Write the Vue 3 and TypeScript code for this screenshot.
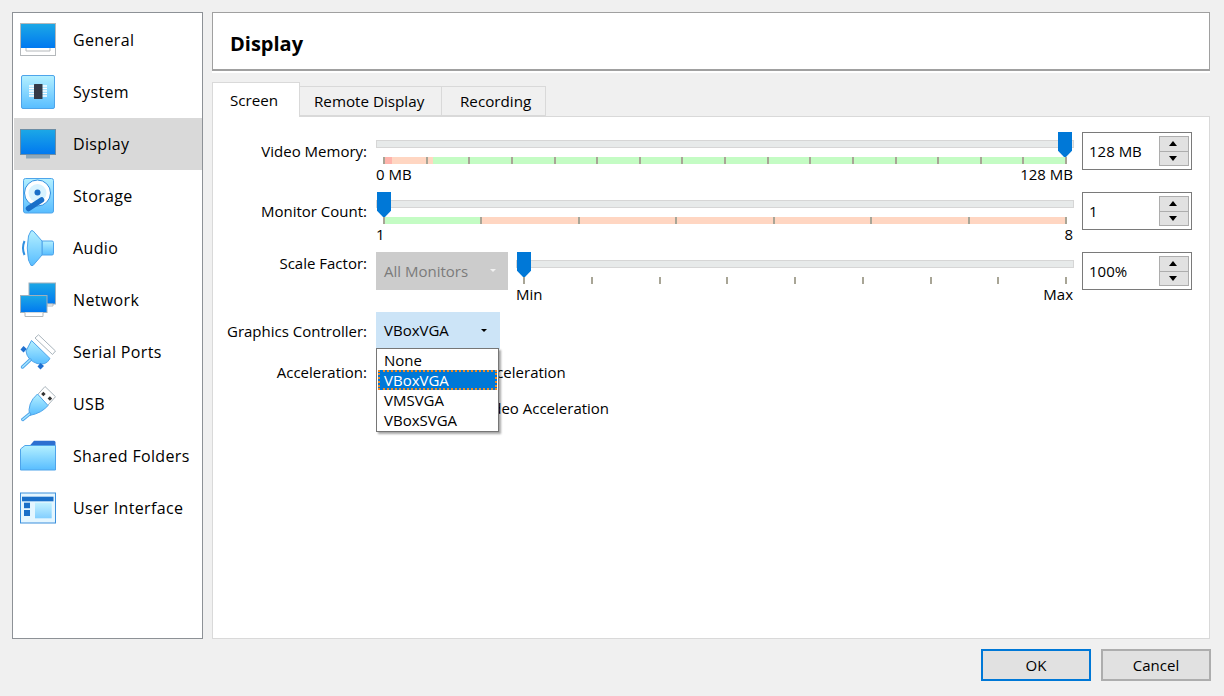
<script setup lang="ts">
interface Seg { color: string; grow: number }

const navItems = ['General', 'System', 'Display', 'Storage', 'Audio', 'Network', 'Serial Ports', 'USB', 'Shared Folders', 'User Interface']
const tabs = ['Screen', 'Remote Display', 'Recording']
const options = ['None', 'VBoxVGA', 'VMSVGA', 'VBoxSVGA']

const memSegs: Seg[] = [
  { color: '#ffb4ac', grow: 7 },
  { color: '#ffd6c2', grow: 41 },
  { color: '#c4fcc4', grow: 633 },
]
const monitorSegs: Seg[] = [
  { color: '#c4fcc4', grow: 97 },
  { color: '#ffd6c2', grow: 584 },
]
</script>

<template>
  <div class="dialog">
    <svg class="defs" width="0" height="0">
      <defs>
        <linearGradient id="screen" x1="0" y1="0" x2="0" y2="1">
          <stop offset="0" stop-color="#1ca8e6" />
          <stop offset="1" stop-color="#0078f0" />
        </linearGradient>
        <linearGradient id="light" x1="0" y1="0" x2="0" y2="1">
          <stop offset="0" stop-color="#b4f0ff" />
          <stop offset="1" stop-color="#58bdff" />
        </linearGradient>
      </defs>
    </svg>

    <div class="body">
      <aside class="sidebar">
        <div v-for="item in navItems" :key="item" class="nav-item" :class="{ active: item === 'Display' }">
          <svg class="icon" viewBox="0 0 36 36" width="36" height="36">
            <template v-if="item === 'General'">
              <rect x="0.5" y="1.5" width="35" height="32" fill="#fff" stroke="#b4b8bb" />
              <rect x="1" y="2" width="34" height="24" fill="url(#screen)" />
              <path d="M6 26v3h24v-3" fill="#fff" stroke="#b4b8bb" />
            </template>
            <template v-else-if="item === 'System'">
              <rect x="1.5" y="1.5" width="33" height="33" rx="1.5" fill="url(#light)" stroke="#4ea4ea" />
              <path d="M9 12h18M9 14.5h18M9 17h18M9 19.5h18M9 22h18" stroke="#fff" stroke-width="1.3" />
              <rect x="14" y="10" width="8.5" height="15" rx="0.5" fill="#333a48" />
            </template>
            <template v-else-if="item === 'Display'">
              <rect x="6" y="28" width="24" height="4.5" fill="#8fa9bb" />
              <rect x="0.5" y="3.5" width="35" height="25" fill="url(#screen)" stroke="#6c8da5" />
            </template>
            <template v-else-if="item === 'Storage'">
              <rect x="3.5" y="0.5" width="30" height="34.5" rx="2" fill="url(#light)" stroke="#4ea4ea" />
              <circle cx="17.5" cy="15" r="13" fill="#fff" stroke="#2f8fe0" stroke-width="1" />
              <circle cx="17.5" cy="15" r="9" fill="#d8f3ff" />
              <circle cx="17.5" cy="14.5" r="3" fill="#1a6fc8" />
              <path d="M21.5 22L8.5 30.5" stroke="#1a6fc8" stroke-width="5.5" stroke-linecap="round" />
            </template>
            <template v-else-if="item === 'Audio'">
              <path d="M22 11h10a1.5 1.5 0 0 1 1.5 1.500v11a1.500 1.500 0 0 1-1.500 1.500h-10z" fill="url(#light)" stroke="#4ea4ea" />
              <path d="M8.500 6L11 .8 13 .8 22 11v14L13 35.500h-2L8.500 30Q6 18 8.500 6z" fill="url(#light)" stroke="#4ea4ea" />
              <path d="M4.500 11Q1.500 18 4.500 25" fill="none" stroke="#2f8fe0" stroke-width="2" />
            </template>
            <template v-else-if="item === 'Network'">
              <rect x="9" y="1" width="26.500" height="21" fill="url(#screen)" stroke="#9fb0bc" />
              <path d="M27 22h6v2h-6z" fill="#fff" stroke="#b4b8bb" />
              <rect x="0.500" y="13.500" width="26.500" height="17" fill="url(#screen)" stroke="#9fb0bc" />
              <path d="M5 30.500v4h18v-4" fill="#fff" stroke="#b4b8bb" />
            </template>
            <template v-else-if="item === 'Serial Ports'">
              <path d="M18.500 .8L35.500 17 32.500 20.500 15 4z" fill="#fff" stroke="#a9b4bc" />
              <path d="M11.500 6.500L30 24.500Q26 32 17 29.500Q7 26 6 17Z" fill="url(#light)" stroke="#4ea4ea" />
              <path d="M3.500 12L6.800 15 3.500 18.500 .5 15.500z" fill="#1f6fcf" />
              <path d="M20.500 29L24 32 20.500 35.500 17.500 32.500z" fill="#1f6fcf" />
              <path d="M10 26L2.500 33" stroke="#4ea4ea" stroke-width="3.500" stroke-linecap="round" />
              <path d="M10 26L2.500 33" stroke="#a6e6ff" stroke-width="1.500" stroke-linecap="round" />
            </template>
            <template v-else-if="item === 'USB'">
              <path d="M25 .5L35.500 10.700 26.700 20.500 17.300 9z" fill="#fff" stroke="#a9b4bc" />
              <rect x="21.800" y="6.500" width="3.200" height="3.200" fill="#333" transform="rotate(45 23.400 8.100)" />
              <rect x="28.300" y="10.800" width="3.200" height="3.200" fill="#333" transform="rotate(45 29.900 12.400)" />
              <path d="M17.500 8L28 19.500Q22 27 9.500 29.500Q7 17 17.500 8z" fill="url(#light)" stroke="#4ea4ea" />
              <path d="M9.500 28L2.800 33.500" stroke="#4ea4ea" stroke-width="3.500" stroke-linecap="round" />
              <path d="M9.500 28L2.800 33.500" stroke="#a6e6ff" stroke-width="1.500" stroke-linecap="round" />
            </template>
            <template v-else-if="item === 'Shared Folders'">
              <path d="M9 8.500L14 2.700H34Q35.500 2.700 35.500 4.500V10H9z" fill="#2d6fd0" />
              <path d="M.5 11L5 7.500H35.500V32H.5z" fill="url(#light)" stroke="#4ea4ea" />
            </template>
            <template v-else>
              <rect x="0.500" y="3" width="35" height="30" fill="#e4f6ff" stroke="#3a8fdc" />
              <rect x="2" y="6.700" width="31.500" height="4.600" fill="#1a6fc8" />
              <rect x="4" y="12.700" width="6" height="5.500" fill="#1a6fc8" />
              <rect x="4" y="20" width="6" height="6" fill="#1a6fc8" />
              <rect x="15" y="12.700" width="16.700" height="15.600" fill="url(#light)" opacity="0.7" />
            </template>
          </svg>
          <span>{{ item }}</span>
        </div>
      </aside>

      <main class="content">
        <header class="title"><h1>Display</h1></header>

        <nav class="tabs">
          <div v-for="(tab, i) in tabs" :key="tab" class="tab" :class="{ active: i === 0 }">{{ tab }}</div>
        </nav>

        <section class="pane">
          <div class="row">
            <label class="label">Video Memory:</label>
            <div class="controls">
              <div class="slider">
                <div class="track"></div>
                <div class="thumb end"></div>
                <div class="bar">
                  <i v-for="s in memSegs" :key="s.color" :style="{ background: s.color, flexGrow: s.grow }"></i>
                  <div class="ticks"><b v-for="n in 17" :key="n"></b></div>
                </div>
                <div class="ends"><span>0 MB</span><span>128 MB</span></div>
              </div>
              <div class="spin">
                <span>128 MB</span>
                <div class="spin-btns"><button class="up"></button><button class="down"></button></div>
              </div>
            </div>
          </div>

          <div class="row">
            <label class="label">Monitor Count:</label>
            <div class="controls">
              <div class="slider">
                <div class="track"></div>
                <div class="thumb"></div>
                <div class="bar">
                  <i v-for="s in monitorSegs" :key="s.color" :style="{ background: s.color, flexGrow: s.grow }"></i>
                  <div class="ticks"><b v-for="n in 8" :key="n"></b></div>
                </div>
                <div class="ends"><span>1</span><span>8</span></div>
              </div>
              <div class="spin">
                <span>1</span>
                <div class="spin-btns"><button class="up"></button><button class="down"></button></div>
              </div>
            </div>
          </div>

          <div class="row">
            <label class="label top">Scale Factor:</label>
            <div class="controls">
              <div class="monitor-combo">
                <span>All Monitors</span>
                <em></em>
              </div>
              <div class="slider">
                <div class="track"></div>
                <div class="thumb"></div>
                <div class="bar plain">
                  <div class="ticks"><b v-for="n in 9" :key="n"></b></div>
                </div>
                <div class="ends"><span>Min</span><span>Max</span></div>
              </div>
              <div class="spin">
                <span>100%</span>
                <div class="spin-btns"><button class="up"></button><button class="down"></button></div>
              </div>
            </div>
          </div>

          <div class="row short">
            <label class="label">Graphics Controller:</label>
            <div class="combo">
              <span>VBoxVGA</span>
              <em></em>
              <ul class="popup">
                <li v-for="o in options" :key="o" :class="{ selected: o === 'VBoxVGA' }">{{ o }}</li>
              </ul>
            </div>
          </div>

          <div class="accel">
            <div class="accel-row">
              <label class="label">Acceleration:</label>
              <span class="check"></span>
              <span>Enable 3D Acceleration</span>
            </div>
            <div class="accel-row">
              <label class="label"></label>
              <span class="check"></span>
              <span>Enable 2D Video Acceleration</span>
            </div>
          </div>
        </section>
      </main>
    </div>

    <footer class="footer">
      <button class="btn default">OK</button>
      <button class="btn">Cancel</button>
    </footer>
  </div>
</template>

<style scoped>
.dialog{width:1224px;height:696px;box-sizing:border-box;background:#f0f0f0;padding:12px 13px 0 12px;font:15px/22px "Open Sans","Noto Sans",sans-serif;color:#000;overflow:hidden;position:relative}
.defs{position:absolute}
.body{display:flex;gap:9px;height:627px;margin-right:1px}
.sidebar{width:191px;box-sizing:border-box;background:#fff;border:1px solid #8d9196;padding:1px 0 0 1px;font-size:16px;letter-spacing:.35px}
.nav-item{height:52px;display:flex;align-items:center;gap:17px;padding-left:6px}
.nav-item.active{background:#d9d9d9}
.icon{flex:none}
.content{flex:1;display:flex;flex-direction:column;min-width:0}
.title{height:59px;box-sizing:border-box;background:#fff;border:1px solid #a0a0a0;border-bottom-width:2px;padding:5px 0 0 17px;display:flex;align-items:center;box-shadow:0 2px 0 #fff}
.title h1{margin:0;font-size:20px;font-weight:700;line-height:24px}
.tabs{display:flex;align-items:flex-end;height:34px;margin-top:11px;position:relative;z-index:1;font-size:15.2px}
.tab{height:30px;width:104px;box-sizing:border-box;border:1px solid #d9d9d9;border-left:0;padding-left:18px;line-height:28px;background:#f0f0f0}
.tab:nth-child(2){width:142px;padding-left:14px}
.tab.active{width:88px;height:35px;margin-bottom:-1px;padding-left:17px;background:#fff;border-left:1px solid #d9d9d9;border-bottom:0;line-height:34px}
.pane{flex:1;background:#fff;border:1px solid #d9d9d9;padding:15px 17px 0 0;display:flex;flex-direction:column;gap:22px}
.row{display:flex;gap:9px;height:38px}
.row.short{height:37px}
.label{width:154px;flex:none;text-align:right;line-height:38px;white-space:nowrap}
.label.top{line-height:22px}
.controls{flex:1;display:flex;gap:8px;min-width:0}
.slider{flex:1;position:relative;height:38px;min-width:0}
.track{height:8px;margin-top:8px;box-sizing:border-box;background:#e7eaea;border:1px solid #d6d6d6}
.thumb{position:absolute;top:0;left:1px;width:14px;height:26px;background:#0078d7;clip-path:polygon(0 0,100% 0,100% 72%,50% 100%,0 72%)}
.thumb.end{left:auto;right:2px}
.bar{position:relative;display:flex;height:7px;margin:9px 7px 0 9px}
.bar i{display:block;flex-basis:0}
.bar.plain{margin-left:7px}
.ticks{position:absolute;top:0;left:-2px;right:0;height:7px;display:flex;justify-content:space-between}
.bar.plain .ticks{left:0}
.ticks b{display:block;width:2px;height:7px;background:#a8a596}
.ends{display:flex;justify-content:space-between;line-height:20px;padding-right:1px}
.spin{width:110px;height:38px;flex:none;box-sizing:border-box;background:#fff;border:1px solid #7a7a7a;display:flex;align-items:center;justify-content:space-between;padding:0 2px 0 6px}
.spin-btns{width:30px;height:30px;display:flex;flex-direction:column}
.spin-btns button{flex:1;padding:0;margin:0;background:#e1e1e1;border:1px solid #adadad;position:relative}
.spin-btns button+button{border-top:0}
.spin-btns button::after{content:"";position:absolute;left:9px;width:0;height:0;border-left:4.500px solid transparent;border-right:4.500px solid transparent}
.spin-btns .up::after{top:4px;border-bottom:5px solid #000}
.spin-btns .down::after{top:4px;border-top:5px solid #000}
.monitor-combo{width:132px;height:38px;flex:none;background:#ccc;color:#7b7b7b;display:flex;align-items:center;justify-content:space-between;padding:0 12px 1px 8px;box-sizing:border-box}
.monitor-combo em{width:0;height:0;border-left:3.500px solid transparent;border-right:3.500px solid transparent;border-top:3.500px solid #f2f2f2}
.combo{width:124px;height:37px;box-sizing:border-box;background:#cce4f7;display:flex;align-items:center;justify-content:space-between;padding:0 13px 1px 8px;position:relative}
.combo em{width:0;height:0;border-left:3.500px solid transparent;border-right:3.500px solid transparent;border-top:3.500px solid #000}
.popup{position:absolute;z-index:2;top:36px;left:0;width:123px;box-sizing:border-box;margin:0;padding:1px;list-style:none;background:#fff;border:1px solid #767676;box-shadow:2px 2px 2px rgba(0,0,0,.35)}
.popup li{height:20px;line-height:20px;padding-left:6px;box-sizing:border-box}
.popup li.selected{background:#0078d7;color:#fff;outline:2px dotted #f08a24;outline-offset:-2px}
.accel{display:flex;flex-direction:column;gap:14px;margin-top:-10px}
.accel-row{display:flex;align-items:center;height:22px}
.accel-row .label{line-height:20px;margin-right:9px}
.accel-row span:last-child{line-height:20px}
.check{width:13px;height:13px;box-sizing:border-box;border:1px solid #333;flex:none}
.accel-row .check{margin-right:16px}
.footer{display:flex;justify-content:flex-end;gap:10px;margin-top:10px}
.btn{width:110px;height:32px;box-sizing:border-box;background:#e1e1e1;border:2px solid #adadad;font:inherit;color:#000;padding:0}
.btn.default{border-color:#0078d7}
</style>

<style>
html,body{margin:0;overflow:hidden;background:#f0f0f0}
</style>
